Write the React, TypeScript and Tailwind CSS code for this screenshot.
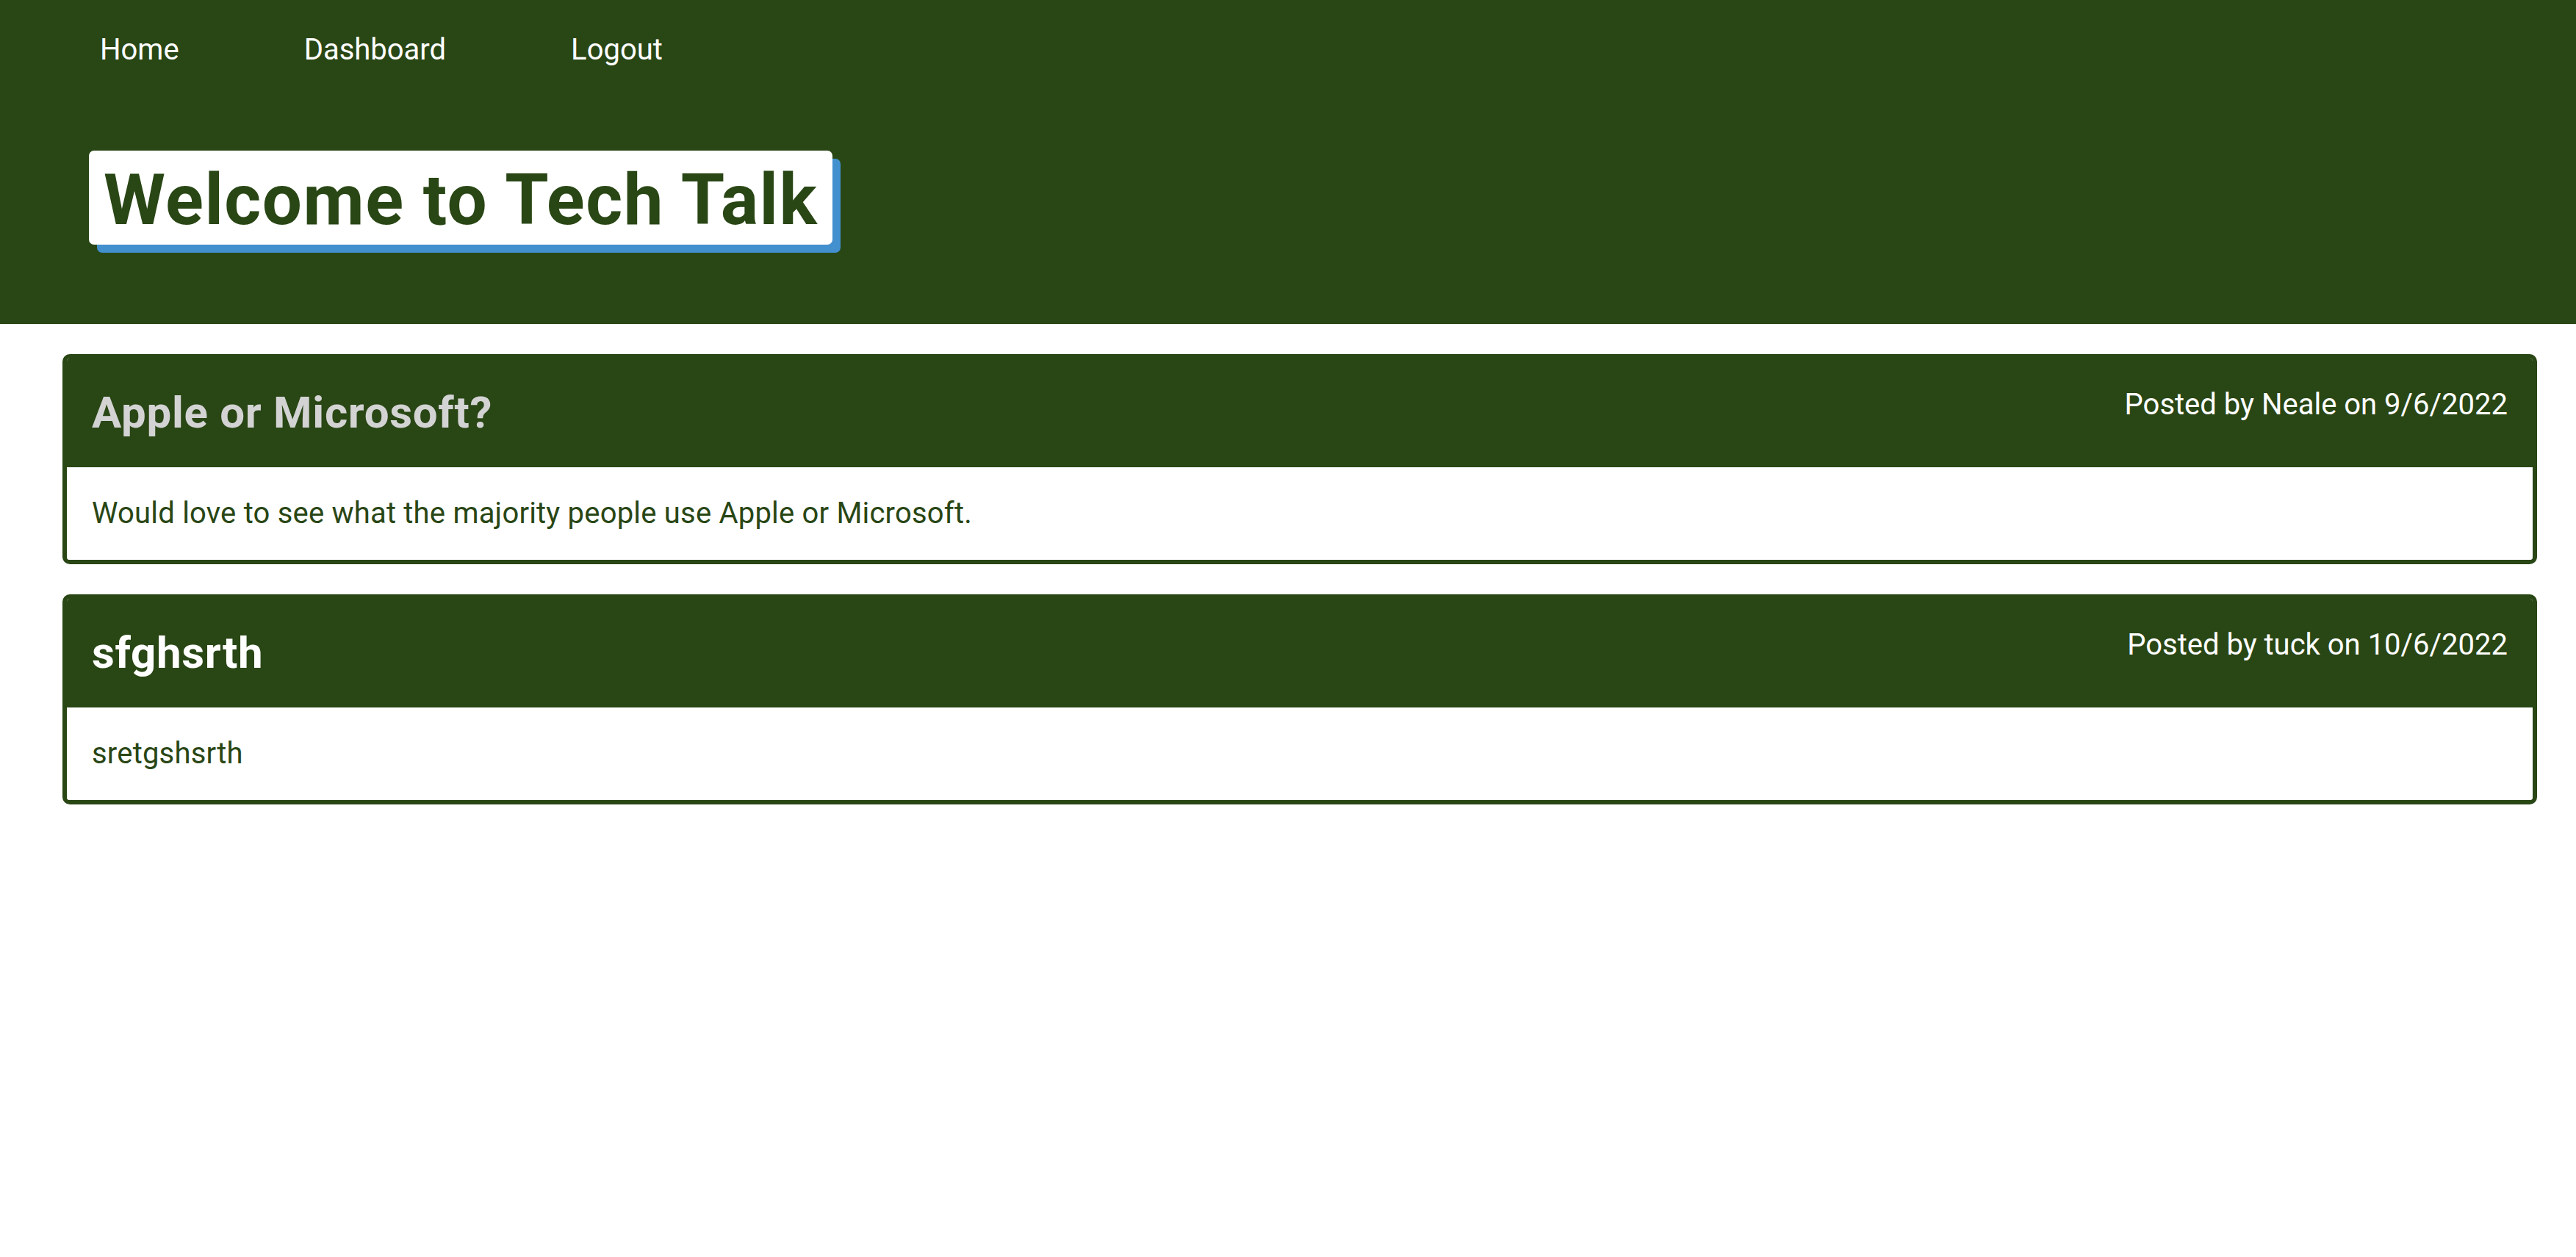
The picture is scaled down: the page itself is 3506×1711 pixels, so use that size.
const posts = [
  {
    id: 1,
    title: "Apple or Microsoft?",
    author: "Neale",
    date: "9/6/2022",
    body: "Would love to see what the majority people use Apple or Microsoft.",
    visited: true,
  },
  {
    id: 2,
    title: "sfghsrth",
    author: "tuck",
    date: "10/6/2022",
    body: "sretgshsrth",
    visited: false,
  },
];

function Header() {
  return (
    <header className="bg-[#294615] pt-[38px] pb-[108px]">
      <nav className="flex gap-[170px] pl-[136px] text-[40px] leading-[60px] text-white">
        <a href="#">Home</a>
        <a href="#">Dashboard</a>
        <a href="#">Logout</a>
      </nav>
      <div className="ml-[121px] mt-[107px] flex">
        <h1 className="rounded-[7px] bg-white px-[20px] pt-[6px] text-[96px] font-bold leading-[122px] tracking-[1.5px] text-[#294615] shadow-[11px_11px_0_#4390cf]">
          Welcome to Tech Talk
        </h1>
      </div>
    </header>
  );
}

export default function App() {
  return (
    <div className="min-h-screen bg-white font-['Roboto',sans-serif]">
      <Header />
      <main className="ml-[85px] mr-[53px] mt-[41px] flex flex-col gap-[41px]">
        {posts.map((post) => (
          <article key={post.id} className="overflow-hidden rounded-[10px] border-[6px] border-[#294615]">
            <div className="flex items-start justify-between bg-[#294615] px-[34px] py-[29px]">
              <h2
                className={
                  post.visited
                    ? "text-[60px] font-bold leading-[90px] tracking-[0.7px] text-[#d3d3d3]"
                    : "text-[60px] font-bold leading-[90px] tracking-[0.7px] text-white"
                }
              >
                {post.title}
              </h2>
              <p className="mt-[4px] text-[40px] leading-[60px] text-white">
                Posted by {post.author} on {post.date}
              </p>
            </div>
            <div className="bg-white px-[34px] py-[33px] text-[40px] leading-[60px] tracking-[0.2px] text-[#294615]">
              {post.body}
            </div>
          </article>
        ))}
      </main>
    </div>
  );
}
